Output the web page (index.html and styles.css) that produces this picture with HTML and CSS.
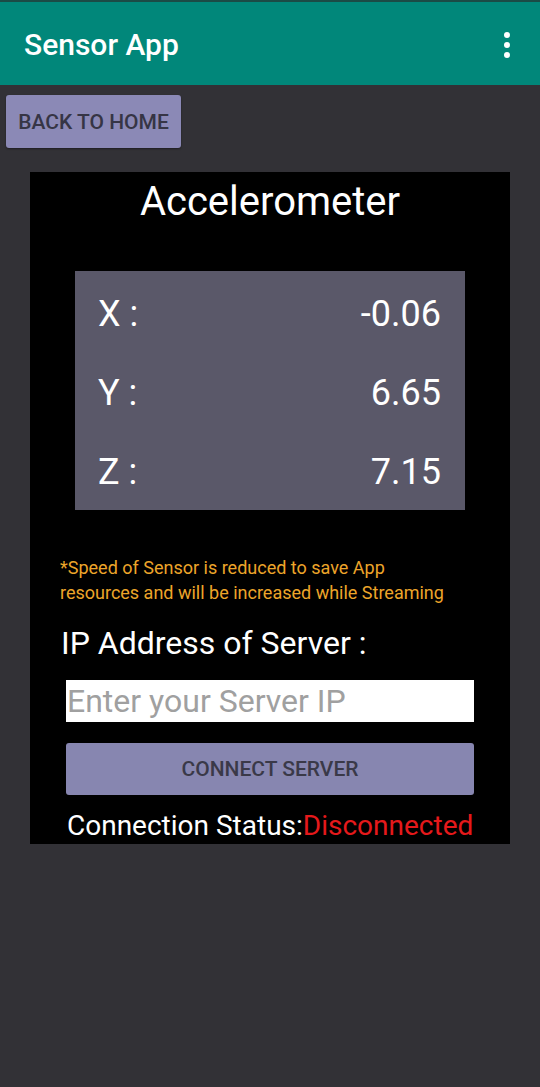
FILE: index.html
```html
<!DOCTYPE html>
<html>
<head>
<meta charset="utf-8">
<link rel="stylesheet" href="styles.css">
</head>
<body>
<header class="appbar">
  <span class="title">Sensor App</span>
  <svg class="menu" width="12" height="28" viewBox="0 0 12 28"><circle cx="6" cy="4" r="3" fill="#fff"/><circle cx="6" cy="14" r="3" fill="#fff"/><circle cx="6" cy="24" r="3" fill="#fff"/></svg>
</header>
<div class="back-wrap"><button class="back">BACK TO HOME</button></div>
<main class="card">
  <h1 class="heading">Accelerometer</h1>
  <div class="panel">
    <div class="row"><span>X :</span><span>-0.06</span></div>
    <div class="row"><span>Y :</span><span>6.65</span></div>
    <div class="row"><span>Z :</span><span>7.15</span></div>
  </div>
  <p class="note">*Speed of Sensor is reduced to save App<br>resources and will be increased while Streaming</p>
  <p class="iplabel">IP Address of Server :</p>
  <div class="input">Enter your Server IP</div>
  <button class="connect">CONNECT SERVER</button>
  <p class="status">Connection Status:<span class="red">Disconnected</span></p>
</main>
</body>
</html>
```
FILE: styles.css
```css
* { box-sizing: border-box; }
html, body { margin: 0; padding: 0; }
body {
  background: #323136;
  font-family: Roboto, "Noto Sans", sans-serif;
  width: 540px;
  height: 1087px;
  overflow: hidden;
}
.appbar {
  height: 85px;
  background: #01877a;
  border-top: 2px solid #1b4b46;
  display: flex;
  align-items: center;
  justify-content: space-between;
  padding: 2px 27px 0 24px;
}
.title {
  color: #fff;
  font-size: 30px;
  font-weight: 500;
}
.menu { display: block; }
.back-wrap { padding: 10px 0 0 6px; }
.back {
  display: block;
  width: 175px;
  height: 53px;
  background: #8b89b6;
  color: #363545;
  border: none;
  border-radius: 3px;
  font-family: Roboto, sans-serif;
  font-size: 21px;
  font-weight: 500;
  padding: 0;
  box-shadow: 0 1px 2px rgba(0,0,0,0.4);
}
.card {
  margin: 24px 0 0 30px;
  width: 480px;
  height: 672px;
  background: #000;
  display: flex;
  flex-direction: column;
}
.heading {
  margin: 8px 0 0;
  color: #fff;
  font-size: 40px;
  font-weight: 400;
  text-align: center;
  line-height: 44px;
}
.panel {
  margin: 47px 45px 0;
  height: 239px;
  background: #5a5869;
  padding: 3px 24px 0 23px;
  color: #fff;
  font-size: 36px;
}
.row {
  height: 79px;
  display: flex;
  justify-content: space-between;
  align-items: center;
}
.note {
  margin: 45px 0 0 30px;
  color: #eda52a;
  font-size: 18px;
  line-height: 25px;
}
.iplabel {
  margin: 18px 0 0 31px;
  color: #fff;
  font-size: 32px;
  line-height: 40px;
}
.input {
  margin: 17px 36px 0;
  height: 42px;
  background: #fff;
  color: #a0a0a0;
  font-size: 32px;
  line-height: 42px;
  padding-left: 1px;
}
.connect {
  margin: 21px 36px 0;
  height: 53px;
  background: #8786b0;
  color: #3a3948;
  border: none;
  border-radius: 3px;
  font-family: Roboto, sans-serif;
  font-size: 21px;
  font-weight: 500;
  padding: 0;
}
.status {
  margin: 13px 0 0 37px;
  color: #fff;
  font-size: 28px;
  line-height: 36px;
}
.red { color: #e5191b; }
```
